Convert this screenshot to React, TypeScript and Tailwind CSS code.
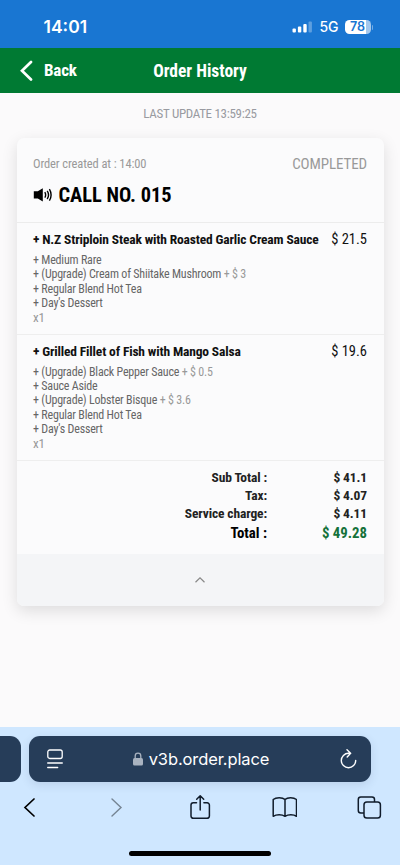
import React from 'react';

interface Option {
    name: string;
    extra?: string;
}

interface OrderItem {
    name: string;
    price: string;
    quantity: number;
    options: Option[];
}

const items: OrderItem[] = [
    {
        name: 'N.Z Striploin Steak with Roasted Garlic Cream Sauce',
        price: '$ 21.5',
        quantity: 1,
        options: [
            {name: 'Medium Rare'},
            {name: '(Upgrade) Cream of Shiitake Mushroom', extra: '$ 3'},
            {name: 'Regular Blend Hot Tea'},
            {name: "Day's Dessert"},
        ],
    },
    {
        name: 'Grilled Fillet of Fish with Mango Salsa',
        price: '$ 19.6',
        quantity: 1,
        options: [
            {name: '(Upgrade) Black Pepper Sauce', extra: '$ 0.5'},
            {name: 'Sauce Aside'},
            {name: '(Upgrade) Lobster Bisque', extra: '$ 3.6'},
            {name: 'Regular Blend Hot Tea'},
            {name: "Day's Dessert"},
        ],
    },
];

const totals = [
    {label: 'Sub Total :', value: '$ 41.1'},
    {label: 'Tax:', value: '$ 4.07'},
    {label: 'Service charge:', value: '$ 4.11'},
];

const StatusBar = () => (
    <div className="flex h-12 items-center justify-between bg-[#1976d2] pl-[43.5px] pr-[27px] pt-[6px] font-['Inter',sans-serif] text-white" >
        <span className="text-[17.5px] font-semibold leading-5" >14:01</span >
        <div className="flex items-center" >
            <svg width="20" height="12" viewBox="0 0 20 12" fill="currentColor" >
                <rect x="0.5" y="7.5" width="3.4" height="4" rx="1" />
                <rect x="5.9" y="5.5" width="3.4" height="6" rx="1" />
                <rect x="11.3" y="3" width="3.4" height="8.5" rx="1" />
                <rect x="16.5" y="0.5" width="3.4" height="11" rx="1" opacity="0.3" />
            </svg >
            <span className="ml-[7px] text-[14px] font-medium leading-5" >5G</span >
            <div className="ml-[6px] flex h-[14.5px] w-[26px] items-center justify-center rounded-[4.5px] bg-linear-to-r from-white from-80% to-[#a3c8ed] to-80% text-[12.5px] font-semibold leading-none text-[#1976d2]" >
                78
            </div >
            <div className="ml-px h-[5px] w-[1.5px] rounded-r bg-[#75ade4]" />
        </div >
    </div >
);

const Header = () => (
    <header className="grid h-[45px] grid-cols-[1fr_auto_1fr] items-center bg-[#007a33] text-[17.5px] font-bold text-white" >
        <div className="flex items-center pl-5" >
            <svg width="13" height="21" viewBox="0 0 13 21" fill="none" stroke="currentColor" strokeWidth="2.7" >
                <path d="m11 2-9 8.800 9 8.700" strokeLinecap="round" />
            </svg >
            <span className="ml-[11px] text-[17px] tracking-[-0.2px]" >Back</span >
        </div >
        <h1 className="pt-[2px]" >Order History</h1 >
    </header >
);

const Item = ({item}: { item: OrderItem }) => (
    <section className="border-b border-[#eeeeee] pb-[9px] pl-[16.5px] pr-[16.5px] pt-[7px]" >
        <div className="flex items-center justify-between leading-[18px] text-[#111]" >
            <h3 className="text-[13.5px] font-bold tracking-[-0.155px]" >+ {item.name}</h3 >
            <span className="pt-[2px] text-[14.5px] leading-4" >{item.price}</span >
        </div >
        <ul className="mt-[5px] text-[12px] leading-[14.4px] tracking-[-0.2px] text-[#666]" >
            {item.options.map((option) => (
                <li key={option.name} >
                    + {option.name}
                    {option.extra && <span className="text-[#999]" > + {option.extra}</span >}
                </li >
            ))}
        </ul >
        <div className="text-[13px] leading-[14px] tracking-[-0.2px] text-[#999]" >x{item.quantity}</div >
    </section >
);

const OrderCard = () => (
    <article className="mx-[16.5px] mt-[14px] overflow-hidden rounded-[7px] bg-[#fbfbfc] shadow-[0_5px_16px_rgba(0,0,0,0.12)]" >
        <div className="h-[85px] border-b border-[#ececec] px-[16.5px] pt-[16px]" >
            <div className="flex items-center justify-between leading-5 text-[#999]" >
                <span className="text-[12.5px] tracking-[-0.1px]" >Order created at : 14:00</span >
                <span className="text-[15px] tracking-[-0.1px]" >COMPLETED</span >
            </div >
            <div className="mt-[9px] flex items-center text-black" >
                <svg width="20" height="16" viewBox="0 0 20 16" fill="none" stroke="currentColor" >
                    <path d="M.8 4.200h4L9.800 1.200v13.200l-5-3H.8z" fill="currentColor" stroke="none" />
                    <path d="M11.800 5.200q1.700 2.700 0 5.400M14.200 3.800q2.700 4.100 0 8.200M16.400 2.200q3.400 5.700 0 11.400" strokeWidth="1.4" />
                </svg >
                <h2 className="ml-[5.5px] text-[20.4px] font-bold leading-6" >CALL NO. 015</h2 >
            </div >
        </div >
        {items.map((item) => <Item key={item.name} item={item} />)}
        <div className="h-[93px] px-[16.5px] pt-[7px] text-right font-bold leading-[18px] text-[#222]" >
            {totals.map((row) => (
                <div key={row.label} className="grid grid-cols-[1fr_100px] text-[13.5px] tracking-[-0.12px]" >
                    <span >{row.label}</span >
                    <span >{row.value}</span >
                </div >
            ))}
            <div className="mt-px grid grid-cols-[1fr_100px] text-[14.8px] leading-[21px]" >
                <span className="text-black" >Total :</span >
                <span className="text-[#14713a]" >$ 49.28</span >
            </div >
        </div >
        <div className="flex h-[52px] items-center justify-center bg-[#f4f5f7]" >
            <svg width="10" height="6" viewBox="0 0 10 6" fill="none" stroke="#888" strokeWidth="1.2" >
                <path d="M.5 5.300 5 .9l4.500 4.400" />
            </svg >
        </div >
    </article >
);

const BrowserBar = () => (
    <footer className="h-[138px] bg-[#cfe7ff] pt-[9px] font-['Inter',sans-serif] text-[#101c2b]" >
        <div className="flex h-[46px] gap-[8.5px]" >
            <div className="w-[20.5px] rounded-r-[11px] bg-[#263d59]" />
            <div className="flex w-[342px] items-center justify-between rounded-[11px] bg-[#263d59] px-[18px] text-white shadow-[0_3px_10px_rgba(38,61,89,0.12)]" >
                <svg width="16" height="20" viewBox="0 0 16 20" fill="none" stroke="currentColor" strokeWidth="1.3" strokeLinecap="round" >
                    <rect x="0.8" y="1" width="14.4" height="8.5" rx="2" />
                    <path d="M.7 14h14.600M.7 18.500h10" />
                </svg >
                <div className="flex items-center" >
                    <svg width="10" height="14" viewBox="0 0 10 14" fill="#a9b3c0" >
                        <rect y="6" width="10" height="7.5" rx="1.5" />
                        <path d="M2.200 6.500V4a2.800 2.800 0 0 1 5.600 0v2.500" fill="none" stroke="#a9b3c0" strokeWidth="1.3" />
                    </svg >
                    <span className="ml-[6px] text-[16.5px] tracking-[-0.1px]" >v3b.order.place</span >
                </div >
                <svg className="-mr-[4px]" width="18" height="21" viewBox="0 0 18 21" fill="none" stroke="currentColor" strokeWidth="1.4" strokeLinecap="round" >
                    <path d="M10.500 4.300H9.500A7.200 7.200 0 1 0 16.700 11.500M8 .8l3.600 3.500L8.200 8" />
                </svg >
            </div >
        </div >
        <div className="flex items-center justify-between pl-[17px] pr-[18px] pt-[12px]" >
            <svg width="26" height="26" viewBox="0 0 26 26" fill="none" stroke="black" strokeWidth="1.7" strokeLinecap="round" >
                <path d="m17 5-9 8.500 9 8.500" />
            </svg >
            <svg width="26" height="26" viewBox="0 0 26 26" fill="none" stroke="#758493" strokeWidth="1.4" strokeLinecap="round" >
                <path d="m10 5 9 8.500-9 8.500" />
            </svg >
            <svg width="26" height="26" viewBox="0 0 26 26" fill="none" stroke="currentColor" strokeWidth="1.5" strokeLinecap="round" strokeLinejoin="round" >
                <path d="M9.500 8.800H6.300A2.300 2.300 0 0 0 4 11.100V22a2.300 2.300 0 0 0 2.300 2.300h13.800a2.300 2.300 0 0 0 2.300-2.300V11.100a2.300 2.300 0 0 0-2.300-2.300h-3.200M13.200 16V1.800M9.700 5.200l3.500-3.500 3.500 3.500" />
            </svg >
            <svg width="26" height="26" viewBox="0 0 26 26" fill="none" stroke="currentColor" strokeWidth="1.5" strokeLinejoin="round" >
                <path d="M14 5.500C11.500 3 5 3 2.200 5.500v16.800c3.200-2 8.700-2 11.800 0 3.200-2 8.600-2 11.500 0V5.500C22.500 3 16.500 3 14 5.500zM14 5.500v16.800" />
            </svg >
            <svg width="26" height="26" viewBox="0 0 26 26" fill="none" stroke="currentColor" strokeWidth="1.5" >
                <rect x="8" y="8" width="16.400" height="16" rx="2.800" />
                <path d="M8 19H4.800A2.500 2.500 0 0 1 2.300 16.500V5.500A2.500 2.500 0 0 1 4.800 3H16a2.500 2.500 0 0 1 2.500 2.500V8" />
            </svg >
        </div >
        <div className="mx-auto mt-[31px] h-[5px] w-[142px] rounded-full bg-black" />
    </footer >
);

const App = () => {
    return (
        <div className="flex h-[865px] w-[400px] flex-col overflow-hidden bg-[#fbfafb] font-['Roboto_Condensed','Roboto',sans-serif] [font-stretch:75%]" >
            <StatusBar />
            <Header />
            <main className="flex-1 pt-[11px]" >
                <p className="text-center text-[13px] leading-5 tracking-[-0.3px] text-[#999ba1]" >LAST UPDATE 13:59:25</p >
                <OrderCard />
            </main >
            <BrowserBar />
        </div >
    )
};

export default App;
